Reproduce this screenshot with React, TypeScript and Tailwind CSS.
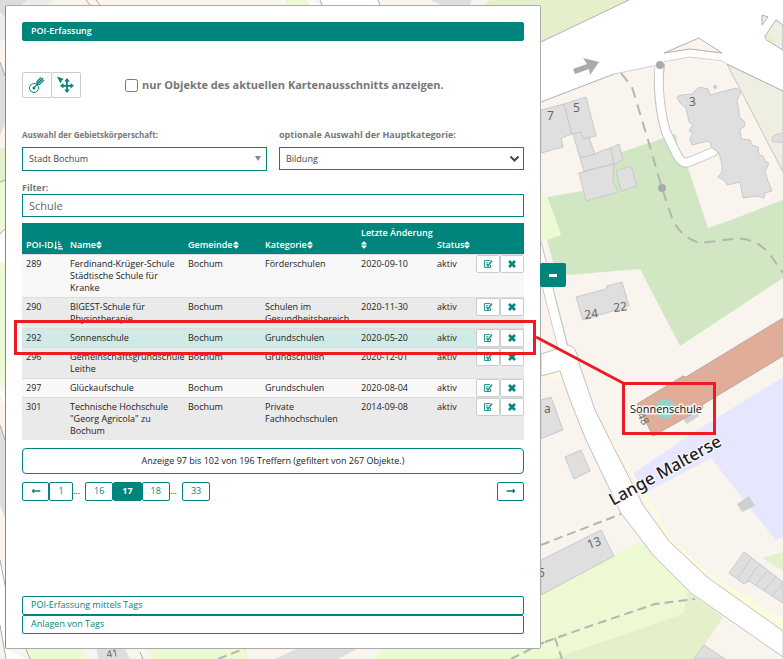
import type { ReactNode } from 'react'
import { FaLongArrowAltLeft, FaLongArrowAltRight, FaSort, FaSortAmountDownAlt } from 'react-icons/fa'

const pois = [
  { id: '289', name: 'Ferdinand-Krüger-Schule Städtische Schule für Kranke', town: 'Bochum', category: 'Förderschulen', date: '2020-09-10' },
  { id: '290', name: 'BIGEST-Schule für Physiotherapie', town: 'Bochum', category: 'Schulen im Gesundheitsbereich', date: '2020-11-30' },
  { id: '292', name: 'Sonnenschule', town: 'Bochum', category: 'Grundschulen', date: '2020-05-20' },
  { id: '296', name: 'Gemeinschaftsgrundschule Leithe', town: 'Bochum', category: 'Grundschulen', date: '2020-12-01' },
  { id: '297', name: 'Glückaufschule', town: 'Bochum', category: 'Grundschulen', date: '2020-08-04' },
  { id: '301', name: 'Technische Hochschule "Georg Agricola" zu Bochum', town: 'Bochum', category: 'Private Fachhochschulen', date: '2014-09-08' },
]

const activeId = '292'

function MapView() {
  return (
    <svg className="absolute inset-0 h-full w-full" aria-hidden="true">
      {/* parks and meadows */}
      <path d="M541 0H629L541 42Z" fill="#e4efcc" />
      <path d="M541 188L556 220L561 235L541 241Z" fill="#edf9d2" />
      <path d="M547 197L583 191L622 152L676 134L678 150L688 168L708 228L731 220L783 200V278L680 346L640 269L568 275L553 262L547 240L561 235L556 220Z" fill="#d1e7c3" />
      <path d="M541 594L640 541L691 593L684 614L562 659H541Z" fill="#edf9d2" />
      <path d="M688 592L723 617L695 659H553L683 614Z" fill="#e4efcc" />
      <path d="M762 558L783 552V571Z" fill="#e4efcc" />
      <path d="M727 64L783 91V172Z" fill="#eeeee3" stroke="#c5c5be" />
      <path d="M783 377L694 432L630 476L641 495L711 458L776 541L783 537Z" fill="#e6e6ff" />
      <path d="M541 377L560 371L575 402L612 440L645 492L672 541L709 573L783 620V632L707 577L669 541L610 440L590 410L560 378Z" fill="#fcfbdd" />
      {/* strips around the panel */}
      <path d="M0 0H28L5 18L0 12Z" fill="#dcdcdc" />
      <path d="M28 0H54L0 42V18Z" fill="#ececec" />
      <path d="M0 62L5 76V124L0 136Z" fill="#dedede" />
      <path d="M0 148H5V182H0Z" fill="#e4efcc" />
      <path d="M0 182H5V230L0 234Z" fill="#edf9d2" />
      <path d="M0 234L5 229V262H0Z" fill="#fff" />
      <path d="M0 265H5V388L0 380Z" fill="#edf9d2" />
      <path d="M0 388L5 396V405L0 394Z" fill="#fff" />
      <path d="M0 425L5 440V518L0 505Z" fill="#dedede" />
      <path d="M0 560L5 572V648L26 659H6L0 625Z" fill="#fff" />
      <path d="M27 649H82L85 659H30ZM148 649H245L249 659H150ZM388 646H545V659H370Z" fill="#edf9d2" />
      <path d="M97 649H125L130 659H98ZM296 649H357L338 659H275Z" fill="#dedede" />
      <path d="M282 0H298L308 0L320 5H322L319 0H378L380 5H285Z" fill="#fff" />
      <path d="M430 0H472L470 5H442Z" fill="#dedede" />
      <path d="M490 0H545V5H484Z" fill="#e4efcc" />
      <path d="M284 0H307L310 5H286Z" fill="#edf9d2" />
      <path d="M0 182L5 180M0 234L5 229M0 62L5 76M86 0L90 5M96 0L100 5M320 0L322 5M378 0L380 5M0 560L6 590M0 625L6 659M0 425L5 440M26 649L30 659M140 652L143 659" fill="none" stroke="#aaa" />
      <path d="M218 659L246 648M511 659L545 642" stroke="#b4b4b4" strokeWidth="2" strokeDasharray="9 5" />
      {/* roads */}
      <path d="M541 42L629 0H783V91L727 64L690 57L658 65L614 74L541 102Z" fill="#fff" />
      <path d="M541 42L629 0M541 102L614 74M783 91L727 64" fill="none" stroke="#b0b0b0" />
      <path d="M614 74L658 65M727 64L722 61L690 57L663 62" fill="none" stroke="#d0d0d0" />
      <path d="M664 53L699 38L722 53L690 49Z" fill="#faf4ef" stroke="#b0b0b0" />
      <path d="M660 66C657 84 660 112 666 132L676 153Q682 165 689 162L713 152" fill="none" stroke="#c4c4c4" strokeWidth="10" strokeLinecap="round" />
      <path d="M660 60C657 84 660 112 666 132L676 153Q682 165 689 162L713 152" fill="none" stroke="#fff" strokeWidth="8" strokeLinecap="round" />
      <path d="M536 242L563 347" stroke="#c4c4c4" strokeWidth="11" />
      <path d="M541 354L560 348L568 345Q577 347 578 360L595 410L610 440L643 505L669 541L707 577L783 631V657L691 593L653 555L621 513L586 440L570 400L560 371L541 376Z" fill="#fff" stroke="#c0c0c0" />
      <path d="M536 242L564 352" stroke="#fff" strokeWidth="9" />
      {/* paths */}
      <path d="M621 73L632 87L648 140L662 188L672 218Q680 237 700 243L733 239Q752 236 769 253L783 273" fill="none" stroke="#b4b4b4" strokeWidth="2" strokeDasharray="11 7" />
      <path d="M541 545L621 514M545 642L590 626L655 604L695 599M555 638L562 659" fill="none" stroke="#b4b4b4" strokeWidth="2" strokeDasharray="9 5" />
      <circle cx="660" cy="65" r="4" fill="#aaa" />
      <circle cx="662" cy="188" r="4" fill="#aaa" />
      <path d="M573 69L587 64L583 58L599 62L590 75L589 69L575 74Z" fill="#aaa" />
      {/* top right island */}
      <path d="M762 15L768 17L762 25Z" fill="#eeeee3" stroke="#b0b0b0" />
      <path d="M783 25L776 20L765 36L766 40L783 50Z" fill="#eeeee3" stroke="#b0b0b0" />
      <path d="M768 32L776 45L765 39Z" fill="#e4efcc" />
      {/* buildings */}
      <g fill="#dfdfdf" stroke="#c9c9c9">
        <path d="M541 110L564 104L572 134L561 138L563 147L541 153Z" />
        <path d="M564 104L586 97L596 136L583 139L581 132L572 134Z" />
        <path d="M573 134L581 132L583 139L589 138L595 154L580 158Z" />
        <path d="M580 158L595 154L601 151L611 148L614 164L584 171Z" />
        <path d="M611 148L619 144L623 160L614 164Z" />
        <path d="M579 173L614 164L613 181L618 192L586 201Z" />
        <path d="M616 171L631 166L637 186L621 191Z" />
        <path d="M677 97L681 95L692 94L699 87L708 89L710 95L736 88L741 91L737 101L740 118L745 122L744 127L740 129L741 139L750 140L752 145L758 147L759 155L763 156L765 161L769 163L765 172L768 181L772 191L765 193L764 198L758 196L743 198L740 182L727 185L725 181L718 177L722 172L722 165L719 153L711 147L711 143L708 141L692 145L690 139L693 132L689 131L693 125L689 122L686 108L680 103Z" />
        <path d="M576 297L606 289L607 286L622 282L629 306L583 320Z" />
        <path d="M541 400L551 397L563 430L545 437L541 439Z" />
        <path d="M565 457L581 450L590 471L574 479Z" />
        <path d="M541 560L601 530L614 556L541 595Z" />
        <path d="M744 552L783 582V603L749 581L744 584L729 573Z" />
        <path d="M752 557L738 578M760 563L746 583M768 570L756 585M776 577L764 590M783 584L772 596" />
        <path d="M694 659L704 645L725 659Z" />
        <path d="M783 133L775 135Q770 138 773 142L783 142" />
      </g>
      <path d="M737 504L749 496L755 506L742 512ZM683 419L697 411L699 416L687 424Z" fill="#d0d0d0" />
      <circle cx="715" cy="87" r="2" fill="#ccc" />
      <path d="M637 404L683 376L686 377L783 318V356L702 405L703 408L653 436Z" fill="#e0ad99" stroke="#b5aaa4" />
      <g className="font-['Noto_Sans']" fill="#666" fontSize="12">
        <text x="547" y="120">7</text>
        <text x="573" y="112">5</text>
        <text x="689" y="106">3</text>
        <text x="585" y="319" transform="rotate(-8 585 319)">24</text>
        <text x="614" y="312" transform="rotate(-8 614 312)">22</text>
        <text x="544" y="413">a</text>
        <text x="589" y="549" transform="rotate(-20 589 549)">13</text>
        <text x="538" y="577">5</text>
        <text x="107" y="658" transform="rotate(-10 107 658)" fontSize="10">41</text>
        <text x="639" y="421" transform="rotate(60 643 416)" fontSize="11">48</text>
      </g>
      <text x="613" y="506" transform="rotate(-29 613 506)" className="font-['Noto_Sans'] font-medium" fontSize="17" fill="#222" stroke="#fff" strokeWidth="2" paintOrder="stroke">
        Lange Malterse
      </text>
      <circle cx="665" cy="409" r="10" fill="#97d2ca" />
      <text x="630" y="413" className="font-['Open_Sans']" fontSize="11" fill="#111" stroke="#fff" strokeWidth="3" strokeOpacity="0.8" paintOrder="stroke">
        Sonnenschule
      </text>
    </svg>
  )
}

function Highlight() {
  return (
    <svg className="pointer-events-none absolute inset-0 z-20 h-full w-full" fill="none" stroke="#ed1c24" strokeWidth="3" aria-hidden="true">
      <rect x="15.5" y="321.5" width="519" height="32" />
      <path d="M536 337L623 383" />
      <rect x="623.5" y="383.5" width="91" height="50" />
    </svg>
  )
}

function TargetIcon() {
  return (
    <svg width="18" height="18" viewBox="0 0 18 18" fill="none" stroke="#00857c">
      <circle cx="6" cy="12" r="4.500" />
      <circle cx="6" cy="12" r="1.500" fill="#00857c" stroke="none" />
      <path d="M6 12L9 8V5.500L13 1.500M9 8L15 2M9 8.500H11.500L16 4M10.500 7L14.500 3" strokeWidth="1.200" />
    </svg>
  )
}

function MoveIcon() {
  return (
    <svg width="20" height="18" viewBox="0 0 20 18" fill="#00857c">
      <path d="M1 0.500L8 3L6 4L4.500 7.500Z" />
      <path d="M11 2L13.800 5.500H11.900V8.900H14.500V7L18 9.800L14.500 12.600V10.700H11.900V13.500H13.800L11 17L8.200 13.500H10.100V10.700H7.500V12.600L4 9.800L7.500 7V8.900H10.100V5.500H8.200Z" />
    </svg>
  )
}

function EditIcon() {
  return (
    <svg width="10" height="10" viewBox="0 0 10 10" fill="none" stroke="#27998f">
      <path d="M7 1.500H1.500V8.500H7.500V6" />
      <path d="M3 3.500H5.500M3 5H4.500" strokeWidth="0.700" />
      <path d="M3.700 5L5 7L9 1.500" strokeWidth="1.600" />
    </svg>
  )
}

function RemoveIcon() {
  return (
    <svg width="8" height="8" viewBox="0 0 8 8" stroke="#00857c" strokeWidth="2.600">
      <path d="M1 1L7 7M7 1L1 7" />
    </svg>
  )
}

function RowButton({ label, children }: { label: string; children: ReactNode }) {
  return (
    <button aria-label={label} className="flex h-[18px] w-full items-center justify-center rounded-xs border border-[#ccc] bg-white">
      {children}
    </button>
  )
}

function HeadCell({ label, sorted }: { label: string; sorted?: boolean }) {
  return (
    <th className="pb-[3px] pl-1 text-left align-bottom font-semibold">
      {label}
      {sorted ? <FaSortAmountDownAlt className="inline size-[9px]" /> : <FaSort className="inline h-[10px] w-[6px]" />}
    </th>
  )
}

function PageButton({ label, active }: { label: string; active?: boolean }) {
  return (
    <button
      className={
        active
          ? 'h-[19px] min-w-6 rounded-xs border border-[#00857c] bg-[#00857c] px-2 font-bold text-white'
          : 'h-[19px] min-w-6 rounded-xs border border-[#00857c] bg-white px-2 text-[#00857c]'
      }
    >
      {label}
    </button>
  )
}

export default function App() {
  return (
    <div className="relative flex min-h-screen items-stretch overflow-hidden bg-[#faf4ef] pt-[5px] pb-[10px] pl-[5px] font-['Open_Sans',sans-serif] text-[9px] leading-3 text-[#222]">
      <MapView />

      <main className="relative z-10 flex w-[536px] flex-col rounded-xs border border-[#aaa] border-l-[#888] bg-white px-4 pt-4 pb-3.5">
        <button className="h-[19px] rounded-xs border border-[#00857c] bg-[#00857c] px-2 pb-px text-left font-semibold text-white">POI-Erfassung</button>

        {/* Toolbar */}
        <div className="mt-[31px] flex items-center">
          <button aria-label="Objekt wählen" className="flex h-[26px] w-[30px] items-center justify-center rounded-xs border border-[#ccc]">
            <TargetIcon />
          </button>
          <button aria-label="Objekt verschieben" className="-ml-px flex h-[26px] w-[30px] items-center justify-center rounded-xs border border-[#ccc]">
            <MoveIcon />
          </button>
          <label className="ml-11 flex items-center gap-1 text-[11px] leading-4 font-bold text-[#777]">
            <input type="checkbox" className="size-[13px]" />
            nur Objekte des aktuellen Kartenausschnitts anzeigen.
          </label>
        </div>

        {/* Filter */}
        <div className="mt-[31px] grid grid-cols-2 gap-3">
          <div>
            <label htmlFor="area" className="block text-[8px] leading-3 font-bold text-[#777]">Auswahl der Gebietskörperschaft:</label>
            <div className="relative mt-1.5">
              <select id="area" className="h-6 w-full appearance-none border border-[#00857c] bg-white px-1.5 text-[#444]">
                <option>Stadt Bochum</option>
              </select>
              <svg className="pointer-events-none absolute top-[9px] right-1.5" width="6" height="5" viewBox="0 0 6 5" fill="#888">
                <path d="M0 0H6L3 5Z" />
              </svg>
            </div>
          </div>
          <div>
            <label htmlFor="category" className="block font-bold text-[#777]">optionale Auswahl der Hauptkategorie:</label>
            <div className="relative mt-1.5">
              <select id="category" className="h-[23px] w-full appearance-none border border-[#00857c] bg-white px-1.5 text-[#444]">
                <option>Bildung</option>
              </select>
              <svg className="pointer-events-none absolute top-2 right-1" width="11" height="8" viewBox="0 0 11 8" fill="none" stroke="#444" strokeWidth="2">
                <path d="M1.500 1.500L5.500 5.500L9.500 1.500" />
              </svg>
            </div>
          </div>
        </div>
        <label htmlFor="filter" className="mt-[11px] font-bold text-[#777]">Filter:</label>
        <input id="filter" defaultValue="Schule" className="h-[23px] border border-[#00857c] px-1.5 text-[11px] text-[#666]" />

        {/* Table */}
        <table className="mt-1.5 w-full table-fixed">
          <colgroup>
            <col className="w-[44px]" />
            <col className="w-[118px]" />
            <col className="w-[77px]" />
            <col className="w-[96px]" />
            <col className="w-[76px]" />
            <col className="w-[43px]" />
            <col className="w-[24px]" />
            <col className="w-[24px]" />
          </colgroup>
          <thead className="bg-[#00857c] text-white">
            <tr className="h-[31px]">
              <HeadCell label="POI-ID" sorted />
              <HeadCell label="Name" />
              <HeadCell label="Gemeinde" />
              <HeadCell label="Kategorie" />
              <HeadCell label="Letzte Änderung" />
              <HeadCell label="Status" />
              <td colSpan={2} />
            </tr>
          </thead>
          <tbody>
            {pois.map((poi) => (
              <tr
                key={poi.id}
                className={
                  poi.id === activeId
                    ? 'border-t border-[#ddd] bg-[#cfeae7] align-top'
                    : 'border-t border-[#ddd] align-top odd:bg-[#f8f8f8] even:bg-[#eaeaea]'
                }
              >
                <td className="py-[3px] pl-1">{poi.id}</td>
                <td className="py-[3px] pl-1">{poi.name}</td>
                <td className="py-[3px] pl-1">{poi.town}</td>
                <td className="py-[3px] pl-1">{poi.category}</td>
                <td className="py-[3px] pl-1">{poi.date}</td>
                <td className="py-[3px] pl-1">aktiv</td>
                <td>
                  <RowButton label="Bearbeiten">
                    <EditIcon />
                  </RowButton>
                </td>
                <td>
                  <RowButton label="Löschen">
                    <RemoveIcon />
                  </RowButton>
                </td>
              </tr>
            ))}
          </tbody>
        </table>

        <p className="mt-2 rounded border border-[#00857c] py-1.5 text-center">
          Anzeige 97 bis 102 von 196 Treffern (gefiltert von 267 Objekte.)
        </p>

        {/* Pagination */}
        <nav className="mt-2 flex items-center">
          <button aria-label="Zurück" className="flex h-[19px] w-[27px] items-center justify-center rounded-xs border border-[#00857c] text-[#00857c]">
            <FaLongArrowAltLeft size={10} />
          </button>
          <PageButton label="1" />
          <span className="w-3">...</span>
          <PageButton label="16" />
          <PageButton label="17" active />
          <PageButton label="18" />
          <span className="w-3">...</span>
          <PageButton label="33" />
          <button aria-label="Weiter" className="ml-auto flex h-[19px] w-[27px] items-center justify-center rounded-xs border border-[#00857c] text-[#00857c]">
            <FaLongArrowAltRight size={10} />
          </button>
        </nav>

        <div className="mt-auto flex flex-col pt-4 text-[#00857c]">
          <button className="h-[19px] rounded-xs border border-[#00857c] px-2 pb-px text-left">POI-Erfassung mittels Tags</button>
          <button className="h-[19px] rounded-xs border border-[#00857c] px-2 pb-px text-left">Anlagen von Tags</button>
        </div>
      </main>

      <button aria-label="Panel einklappen" className="relative z-10 -ml-px mt-[258px] flex h-6 w-[26px] items-center justify-center rounded-xs bg-[#00857c]">
        <span className="h-[3px] w-2 bg-white" />
      </button>

      <Highlight />
    </div>
  )
}
